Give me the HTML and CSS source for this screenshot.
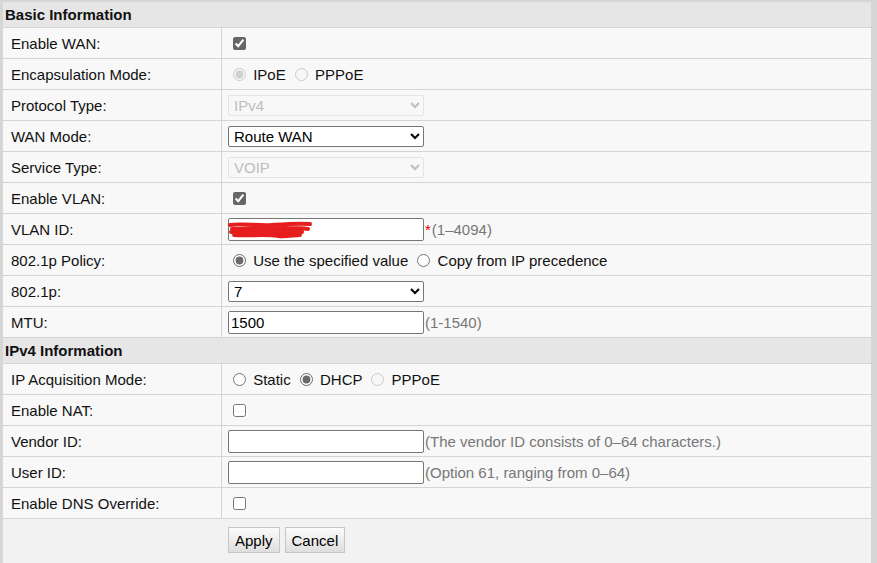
FILE: index.html
```html
<!DOCTYPE html>
<html>
<head>
<meta charset="utf-8">
<link rel="stylesheet" href="styles.css">
</head>
<body>
<div class="panel">
  <div class="section">Basic Information</div>
  <div class="row">
    <div class="label">Enable WAN:</div>
    <div class="value"><div class="ctl"><input type="checkbox" checked></div></div>
  </div>
  <div class="row">
    <div class="label">Encapsulation Mode:</div>
    <div class="value"><div class="ctl"><input type="radio" name="enc" checked disabled> IPoE <input type="radio" name="enc" disabled> PPPoE</div></div>
  </div>
  <div class="row">
    <div class="label">Protocol Type:</div>
    <div class="value"><div class="ctl"><select class="sel" disabled><option>IPv4</option></select></div></div>
  </div>
  <div class="row">
    <div class="label">WAN Mode:</div>
    <div class="value"><div class="ctl"><select class="sel"><option>Route WAN</option><option>Bridge WAN</option></select></div></div>
  </div>
  <div class="row">
    <div class="label">Service Type:</div>
    <div class="value"><div class="ctl"><select class="sel" disabled><option>VOIP</option></select></div></div>
  </div>
  <div class="row">
    <div class="label">Enable VLAN:</div>
    <div class="value"><div class="ctl"><input type="checkbox" checked></div></div>
  </div>
  <div class="row">
    <div class="label">VLAN ID:</div>
    <div class="value"><div class="ctl"><span class="redact"><input class="txt" type="text" value=""><svg class="scribble" width="86" height="22" viewBox="0 0 86 22"><path d="M2 6 C14 4 30 7 44 6 C58 5 70 4 82 5 M4 10 C20 9 40 11 60 9 C68 9 74 9 80 10 M3 13 C18 14 30 12 46 13 C56 14 66 12 74 13 M6 16 C20 17 40 15 50 17 C58 18 66 16 72 16" fill="none" stroke="#e61e1e" stroke-width="4" stroke-linecap="round"/></svg></span><span class="req">*</span><span class="hint">(1–4094)</span></div></div>
  </div>
  <div class="row">
    <div class="label">802.1p Policy:</div>
    <div class="value"><div class="ctl"><input type="radio" name="pol" checked> Use the specified value <input type="radio" name="pol"> Copy from IP precedence</div></div>
  </div>
  <div class="row">
    <div class="label">802.1p:</div>
    <div class="value"><div class="ctl"><select class="sel"><option>7</option></select></div></div>
  </div>
  <div class="row">
    <div class="label">MTU:</div>
    <div class="value"><div class="ctl"><input class="txt" type="text" value="1500"><span class="hint">(1-1540)</span></div></div>
  </div>
  <div class="section">IPv4 Information</div>
  <div class="row">
    <div class="label">IP Acquisition Mode:</div>
    <div class="value"><div class="ctl"><input type="radio" name="acq"> Static <input type="radio" name="acq" checked> DHCP <input type="radio" name="acq" disabled> PPPoE</div></div>
  </div>
  <div class="row">
    <div class="label">Enable NAT:</div>
    <div class="value"><div class="ctl"><input type="checkbox"></div></div>
  </div>
  <div class="row">
    <div class="label">Vendor ID:</div>
    <div class="value"><div class="ctl"><input class="txt" type="text"><span class="hint">(The vendor ID consists of 0–64 characters.)</span></div></div>
  </div>
  <div class="row">
    <div class="label">User ID:</div>
    <div class="value"><div class="ctl"><input class="txt" type="text"><span class="hint">(Option 61, ranging from 0–64)</span></div></div>
  </div>
  <div class="row">
    <div class="label">Enable DNS Override:</div>
    <div class="value"><div class="ctl"><input type="checkbox"></div></div>
  </div>
  <div class="actions">
    <button class="btn">Apply</button>
    <button class="btn">Cancel</button>
  </div>
</div>
</body>
</html>
```
FILE: styles.css
```css
html, body {
  margin: 0;
  padding: 0;
  background: #d6d6d6;
  height: 100%;
}
body {
  padding: 2px 6px 0 3px;
  box-sizing: border-box;
  font-family: "Liberation Sans", Arial, sans-serif;
  font-size: 15px;
  color: #111;
  overflow: hidden;
}
.panel {
  background: #f2f2f2;
  min-height: 561px;
}
.section {
  height: 25px;
  line-height: 25px;
  padding-left: 2px;
  font-weight: bold;
  background: #e6e6e6;
  border-bottom: 1px solid #d4d4d4;
}
.row {
  display: flex;
  height: 30px;
  border-bottom: 1px solid #d4d4d4;
  background: #f8f8f8;
}
.label {
  width: 210px;
  flex: none;
  padding-left: 8px;
  border-right: 1px solid #d4d4d4;
  display: flex;
  align-items: center;
}
.value {
  flex: 1;
  padding-left: 6px;
  display: flex;
  align-items: center;
}
.ctl {
  display: flex;
  align-items: center;
  white-space: pre;
}
.ctl input[type=checkbox] {
  width: 13px;
  height: 13px;
  margin: 3px 3px 3px 5px;
  accent-color: #666;
}
.ctl input[type=radio] {
  width: 13px;
  height: 13px;
  margin: 0 3px 0 5px;
  accent-color: #6a6a6a;
}
.sel {
  width: 196px;
  height: 21px;
  font-family: "Liberation Sans", Arial, sans-serif;
  font-size: 15px;
  color: #000;
  border: 1px solid #767676;
  border-radius: 2px;
  background-color: #fff;
  margin: 0;
  padding: 0 0 0 1px;
}
.sel:disabled {
  color: #a6a6a6;
  border-color: #dcdcdc;
  background-color: #f8f8f8;
}
.txt {
  width: 196px;
  height: 23px;
  box-sizing: border-box;
  font-family: "Liberation Sans", Arial, sans-serif;
  font-size: 15px;
  color: #000;
  border: 1px solid #767676;
  border-radius: 2px;
  background: #fff;
  margin: 0;
  padding: 1px 2px 0;
}
.redact {
  position: relative;
  display: inline-flex;
}
.scribble {
  position: absolute;
  left: 0;
  top: 1px;
}
.req {
  color: #e00;
  margin-left: 1px;
}
.hint {
  color: #777;
  margin-left: 1px;
}
.actions {
  display: flex;
  gap: 5px;
  padding: 8px 0 0 225px;
  height: 36px;
  background: #f2f2f2;
}
.btn {
  height: 26px;
  font-family: "Liberation Sans", Arial, sans-serif;
  font-size: 15px;
  color: #000;
  padding: 0 6px;
  border: 1px solid #c6c6c6;
  border-radius: 0;
  background: linear-gradient(#fbfbfb, #dedede);
}
```
